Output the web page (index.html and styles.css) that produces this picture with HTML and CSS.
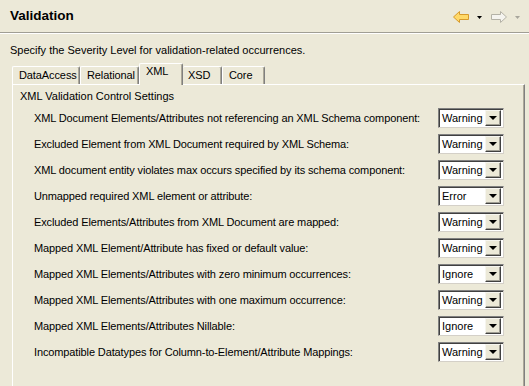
FILE: index.html
```html
<!DOCTYPE html>
<html>
<head>
<meta charset="utf-8">
<link rel="stylesheet" href="styles.css">
</head>
<body>
<div class="header">
  <div class="title">Validation</div>
  <div class="toolbar">
    <svg class="arrow" width="17" height="12" viewBox="0 0 17 12">
      <path d="M0.5,6 L6.5,0.5 L6.5,3.5 L15.5,3.5 L15.5,8.5 L6.5,8.5 L6.5,11.5 Z" fill="#ffd968" stroke="#d79a2c" stroke-width="1"/>
    </svg>
    <svg class="drop" width="5" height="3" viewBox="0 0 5 3"><path d="M0,0 L5,0 L2.5,3 Z" fill="#000"/></svg>
    <svg class="arrow fwd" width="17" height="12" viewBox="0 0 17 12">
      <path d="M16.5,6 L10.5,0.5 L10.5,3.5 L1.5,3.5 L1.5,8.5 L10.5,8.5 L10.5,11.5 Z" fill="#f5f4ef" stroke="#b4b2a6" stroke-width="1"/>
    </svg>
    <svg class="drop" width="5" height="3" viewBox="0 0 5 3"><path d="M0,0 L5,0 L2.5,3 Z" fill="#a8a69c"/></svg>
  </div>
</div>
<div class="content">
  <div class="desc">Specify the Severity Level for validation-related occurrences.</div>
  <div class="tabs">
    <div class="tab t1">DataAccess</div>
    <div class="tab t2">Relational</div>
    <div class="tab t3 selected">XML</div>
    <div class="tab t4">XSD</div>
    <div class="tab t5">Core</div>
  </div>
  <div class="panel">
    <div class="group">XML Validation Control Settings</div>
    <div class="rows">
      <div class="row"><span class="label">XML Document Elements/Attributes not referencing an XML Schema component:</span><div class="combo"><span class="val">Warning</span><span class="btn"></span></div></div>
      <div class="row"><span class="label">Excluded Element from XML Document required by XML Schema:</span><div class="combo"><span class="val">Warning</span><span class="btn"></span></div></div>
      <div class="row"><span class="label">XML document entity violates max occurs specified by its schema component:</span><div class="combo"><span class="val">Warning</span><span class="btn"></span></div></div>
      <div class="row"><span class="label">Unmapped required XML element or attribute:</span><div class="combo"><span class="val">Error</span><span class="btn"></span></div></div>
      <div class="row"><span class="label">Excluded Elements/Attributes from XML Document are mapped:</span><div class="combo"><span class="val">Warning</span><span class="btn"></span></div></div>
      <div class="row"><span class="label">Mapped XML Element/Attribute has fixed or default value:</span><div class="combo"><span class="val">Warning</span><span class="btn"></span></div></div>
      <div class="row"><span class="label">Mapped XML Elements/Attributes with zero minimum occurrences:</span><div class="combo"><span class="val">Ignore</span><span class="btn"></span></div></div>
      <div class="row"><span class="label">Mapped XML Elements/Attributes with one maximum occurrence:</span><div class="combo"><span class="val">Warning</span><span class="btn"></span></div></div>
      <div class="row"><span class="label">Mapped XML Elements/Attributes Nillable:</span><div class="combo"><span class="val">Ignore</span><span class="btn"></span></div></div>
      <div class="row"><span class="label">Incompatible Datatypes for Column-to-Element/Attribute Mappings:</span><div class="combo"><span class="val">Warning</span><span class="btn"></span></div></div>
    </div>
  </div>
</div>
</body>
</html>
```
FILE: styles.css
```css
html, body {
  margin: 0;
  padding: 0;
  background: #ece9d8;
  font-family: "Liberation Sans", Arial, sans-serif;
  font-size: 11px;
  color: #000;
  overflow: hidden;
  height: 386px;
}
.header {
  height: 33px;
  box-sizing: border-box;
  border-bottom: 1px solid #a09e94;
  box-shadow: 0 1px 0 #ffffff;
  display: flex;
  align-items: center;
  padding: 0 0 0 10px;
}
.title {
  font-weight: bold;
  font-size: 13.5px;
  flex: 1;
  margin-top: -1px;
}
.toolbar {
  display: flex;
  align-items: center;
  padding-right: 9px;
  margin-top: 2px;
}
.arrow { display: block; }
.drop { display: block; margin: 0 8px 0 7px; }
.drop:last-child { margin-right: 0; margin-left: 8px; }
.content {
  padding: 11px 0 0 10px;
}
.desc {
  line-height: 13px;
  height: 13px;
}
.tabs {
  display: flex;
  align-items: flex-end;
  margin-top: 6px;
  padding-left: 2px;
  height: 21px;
  position: relative;
  z-index: 2;
}
.tab {
  box-sizing: border-box;
  height: 18px;
  border-top: 1px solid #fff;
  border-left: 1px solid #fff;
  border-right: 1px solid #808080;
  box-shadow: inset -1px 0 0 #aca899;
  padding: 2px 0 0 6px;
  line-height: 13px;
  border-radius: 2px 2px 0 0;
  white-space: nowrap;
  letter-spacing: -0.1px;
}
.t1 { width: 68px; }
.t2 { width: 59px; }
.t3 { width: 44px; }
.t4 { width: 39px; }
.t5 { width: 43px; }
.tab.selected {
  height: 22px;
  margin-bottom: -1px;
  background: #ece9d8;
  padding-top: 1px;
  padding-left: 6px;
}
.t4 { border-left: none; padding-left: 5px; }
.panel {
  margin-left: 2px;
  width: 513px;
  box-sizing: border-box;
  height: 320px;
  border-top: 1px solid #fff;
  border-left: 1px solid #fff;
  border-right: 1px solid #808080;
  box-shadow: inset -1px 0 0 #aca899;
  padding: 5px 20px 0 7px;
  position: relative;
  z-index: 1;
}
.group {
  line-height: 13px;
}
.rows {
  margin-top: 5px;
  padding-left: 14px;
  display: flex;
  flex-direction: column;
  gap: 6px;
}
.row {
  display: flex;
  align-items: center;
  height: 20px;
}
.label {
  flex: 1;
  white-space: nowrap;
  letter-spacing: -0.12px;
}
.combo {
  width: 66px;
  height: 20px;
  box-sizing: border-box;
  background: #fff;
  border-top: 1px solid #808080;
  border-left: 1px solid #808080;
  border-right: 1px solid #d4d0c8;
  border-bottom: 1px solid #d4d0c8;
  box-shadow: inset 1px 1px 0 #404040, inset -1px -1px 0 #ffffff;
  display: flex;
  align-items: center;
  padding: 2px 2px 2px 3px;
}
.val {
  flex: 1;
  line-height: 13px;
}
.btn {
  width: 16px;
  height: 16px;
  box-sizing: border-box;
  background: #ece9d8;
  border-top: 1px solid #f6f5ef;
  border-left: 1px solid #f6f5ef;
  border-right: 1px solid #404040;
  border-bottom: 1px solid #404040;
  box-shadow: inset -1px -1px 0 #a09e94;
  position: relative;
}
.btn::after {
  content: "";
  position: absolute;
  left: 3px;
  top: 5px;
  border-left: 4px solid transparent;
  border-right: 4px solid transparent;
  border-top: 4px solid #000;
}
```
